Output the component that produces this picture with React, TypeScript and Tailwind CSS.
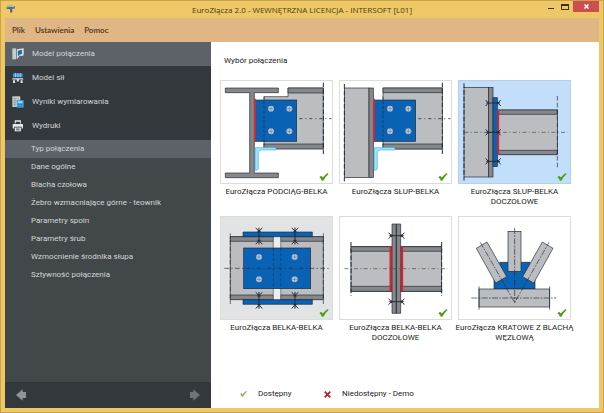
import { useState } from 'react';
import type { ReactNode } from 'react';

interface Connection {
  id: string;
  label: string;
  background: string;
  viewBox: string;
  drawing: ReactNode;
}

const STEEL = '#bcbdc1';
const FLANGE = '#858789';
const BLUE = '#0a62b4';
const LINE = '#222b36';
const RED = '#e0202c';

const subItems = [
  'Typ połączenia',
  'Dane ogólne',
  'Blacha czołowa',
  'Żebro wzmacniające górne - teownik',
  'Parametry spoin',
  'Parametry śrub',
  'Wzmocnienie środnika słupa',
  'Sztywność połączenia',
];

function BoltHead({ x, y }: { x: number; y: number }) {
  return (
    <g>
      <circle cx={x} cy={y} r="9" fill="#c9d3df" stroke="#2b5f98" strokeWidth="1" />
      <path d={`M${x - 7} ${y}h14M${x} ${y - 7}v14`} stroke="#66707c" strokeWidth="2" />
    </g>
  );
}

// Bolt seen from the side, x1..x2 are the tips of the shank
function SideBolt({ x1, x2, y }: { x1: number; x2: number; y: number }) {
  return (
    <path
      d={`M${x1} ${y}H${x2}M${x1 - 2} ${y - 9}l8 9l-8 9M${x2 + 2} ${y - 9}l-8 9l8 9M${x1 + 7} ${y - 4}v8M${x2 - 7} ${y - 4}v8`}
      fill="none"
      stroke={LINE}
      strokeWidth="3"
    />
  );
}

function VerticalBolt({ x, y }: { x: number; y: number }) {
  return (
    <path
      d={`M${x} ${y}v50M${x - 10} ${y + 1}l10 9l10 -9M${x - 10} ${y + 49}l10 -9l10 9M${x - 5} ${y + 12}h10M${x - 5} ${y + 38}h10`}
      fill="none"
      stroke={LINE}
      strokeWidth="3"
    />
  );
}

// Shear plate with four bolts, shared by both pinned joints
function ShearPlate() {
  return (
    <g>
      <rect x="123" y="76" width="123" height="124" fill={BLUE} stroke={LINE} strokeWidth="2" />
      <path d="M121 72v130" stroke={RED} strokeWidth="5" />
      <path d="M148 66v146" stroke={LINE} strokeWidth="2" strokeDasharray="9 5" />
      <BoltHead x={169} y={102} />
      <BoltHead x={224} y={102} />
      <BoltHead x={169} y={170} />
      <BoltHead x={224} y={170} />
      <path d="M122 219h58q6 0 4 7h-45q-8 0 -8 8v46q0 7 -9 7z" fill="#9ee2fb" stroke="#46b6e0" strokeWidth="2" />
      <path d="M254 132h96" stroke="#45484d" strokeWidth="3" strokeDasharray="9 9 3 9" />
      <path d="M326 24v216" stroke={LINE} strokeWidth="3" strokeDasharray="14 6" />
    </g>
  );
}

const connections: Connection[] = [
  {
    id: 'podciag-belka',
    label: 'EuroZłącza PODCIĄG-BELKA',
    background: 'bg-white border-[#dcdcdc]',
    viewBox: '19 19 333 306',
    drawing: (
      <g>
        <path d="M148 66H220V40H326V222H148z" fill={STEEL} stroke={LINE} strokeWidth="2" />
        <path d="M220 40H326V55H220zM148 208H326V223H148z" fill={FLANGE} stroke={LINE} strokeWidth="2" />
        <path
          d="M32 40H191V54H119V295H191V309H32V295H105V54H32z"
          fill={FLANGE}
          stroke={LINE}
          strokeWidth="2"
        />
        <ShearPlate />
      </g>
    ),
  },
  {
    id: 'slup-belka',
    label: 'EuroZłącza SŁUP-BELKA',
    background: 'bg-white border-[#dcdcdc]',
    viewBox: '19 19 333 306',
    drawing: (
      <g>
        <rect x="32" y="40" width="74" height="269" fill={STEEL} stroke={LINE} strokeWidth="2" />
        <rect x="106" y="40" width="13" height="269" fill={FLANGE} stroke={LINE} strokeWidth="2" />
        <path d="M32 28v292" stroke={LINE} strokeWidth="3" strokeDasharray="14 6" />
        <rect x="148" y="40" width="178" height="183" fill={STEEL} stroke={LINE} strokeWidth="2" />
        <path d="M148 40H326V54H148zM148 208H326V223H148z" fill={FLANGE} stroke={LINE} strokeWidth="2" />
        <ShearPlate />
      </g>
    ),
  },
  {
    id: 'slup-belka-doczolowe',
    label: 'EuroZłącza SŁUP-BELKA\nDOCZOŁOWE',
    background: 'bg-[#c3defb] border-[#b6cfea]',
    viewBox: '24 19 333 306',
    drawing: (
      <g>
        <rect x="39" y="38" width="73" height="269" fill={STEEL} stroke={LINE} strokeWidth="2" />
        <rect x="112" y="38" width="14" height="269" fill={FLANGE} stroke={LINE} strokeWidth="2" />
        <path d="M39 26v292" stroke={LINE} strokeWidth="3" strokeDasharray="14 6" />
        <rect x="142" y="106" width="177" height="133" fill={STEEL} stroke={LINE} strokeWidth="2" />
        <path d="M142 106H319V119H142zM142 227H319V240H142z" fill={FLANGE} stroke={LINE} strokeWidth="2" />
        <path d="M319 64v218" stroke={LINE} strokeWidth="2" strokeDasharray="14 6" />
        <rect x="126" y="69" width="13" height="207" fill={BLUE} stroke={LINE} strokeWidth="2" />
        <path d="M142 105v136" stroke={RED} strokeWidth="5" />
        <path d="M40 173h310" stroke="#45484d" strokeWidth="2" strokeDasharray="12 7 3 7" />
        <SideBolt x1={106} x2={147} y={85} />
        <SideBolt x1={106} x2={147} y={173} />
        <SideBolt x1={106} x2={147} y={260} />
      </g>
    ),
  },
  {
    id: 'belka-belka',
    label: 'EuroZłącza BELKA-BELKA',
    background: 'bg-[#e2e3e4] border-[#dcdcdc]',
    viewBox: '19 21 333 306',
    drawing: (
      <g>
        <path d="M47 80H176V268H47zM198 80H326V268H198z" fill={STEEL} stroke={LINE} strokeWidth="2" />
        <path
          d="M47 80H176V94H47zM198 80H326V94H198zM47 255H176V269H47zM198 255H326V269H198z"
          fill={FLANGE}
          stroke={LINE}
          strokeWidth="2"
        />
        <rect x="177" y="81" width="20" height="187" fill="#ededee" />
        <path d="M47 70v212M326 70v212" stroke={LINE} strokeWidth="2" strokeDasharray="14 6" />
        <path d="M85 66H293V80H85zM85 269H293V283H85z" fill={BLUE} stroke={LINE} strokeWidth="2" />
        <rect x="87" y="114" width="201" height="122" fill={BLUE} stroke={LINE} strokeWidth="2" />
        <path d="M176 114v122M198 114v122" stroke="#123d69" strokeWidth="2" strokeDasharray="10 5" />
        <path d="M29 175h314" stroke={LINE} strokeWidth="2" strokeDasharray="14 7 4 7" />
        <BoltHead x={133} y={141} />
        <BoltHead x={240} y={141} />
        <BoltHead x={133} y={208} />
        <BoltHead x={240} y={208} />
        <VerticalBolt x={133} y={53} />
        <VerticalBolt x={241} y={53} />
        <VerticalBolt x={133} y={246} />
        <VerticalBolt x={241} y={246} />
      </g>
    ),
  },
  {
    id: 'belka-belka-doczolowe',
    label: 'EuroZłącza BELKA-BELKA\nDOCZOŁOWE',
    background: 'bg-white border-[#dcdcdc]',
    viewBox: '19 21 333 306',
    drawing: (
      <g>
        <rect x="52" y="110" width="272" height="134" fill={STEEL} stroke={LINE} strokeWidth="2" />
        <path d="M52 110H324V124H52zM52 229H324V244H52z" fill={FLANGE} stroke={LINE} strokeWidth="2" />
        <path d="M52 96v162M324 96v162" stroke={LINE} strokeWidth="3" strokeDasharray="14 6" />
        <path d="M171 109v135M205 109v135" stroke={RED} strokeWidth="7" />
        <path d="M175 42H188V310H175zM188 42H201V310H188z" fill={FLANGE} stroke={LINE} strokeWidth="2" />
        <path d="M32 176h310" stroke="#45484d" strokeWidth="2" strokeDasharray="12 7 3 7" />
        <SideBolt x1={167} x2={210} y={77} />
        <SideBolt x1={167} x2={210} y={275} />
      </g>
    ),
  },
  {
    id: 'kratowe',
    label: 'EuroZłącza KRATOWE Z BLACHĄ\nWĘZŁOWĄ',
    background: 'bg-white border-[#dcdcdc]',
    viewBox: '25 21 333 306',
    drawing: (
      <g>
        <path d="M147 157H238V196L253 206V237H130V206L147 196z" fill={BLUE} stroke={LINE} strokeWidth="2" />
        <rect x="85" y="237" width="212" height="54" fill={STEEL} stroke={LINE} strokeWidth="2" />
        <rect x="172" y="64" width="39" height="120" fill={STEEL} stroke={LINE} strokeWidth="2" />
        <path d="M77 115L109 96L168 200L135 219z" fill={STEEL} stroke={LINE} strokeWidth="2" />
        <path d="M307 115L275 96L216 200L249 219z" fill={STEEL} stroke={LINE} strokeWidth="2" />
        <path
          d="M89 97L192 278L295 97M192 54V278M62 264H317"
          fill="none"
          stroke={LINE}
          strokeWidth="2"
          strokeDasharray="18 4 5 4"
        />
        <path d="M85 229v70M297 229v70" stroke={LINE} strokeWidth="2" />
      </g>
    ),
  },
];

function CheckIcon({ className }: { className: string }) {
  return (
    <svg viewBox="0 0 30 26" className={className} aria-hidden="true">
      <path d="M0 14L6 9L11 15Q18 6 27 0L30 3Q19 12 13 25H8Q6 19 0 14z" fill="#4c9f14" />
    </svg>
  );
}

const navItems = [
  {
    label: 'Model połączenia',
    icon: (
      <g>
        <path d="M1 1H12V33H1z" fill="#c5cbd0" />
        <path d="M14 4L34 1V21L26 24L23 21L16 31H14z" fill="#dce3e8" />
        <path d="M17 8L29 5V18L22 19L17 24z" fill="#1d6ca8" />
      </g>
    ),
  },
  {
    label: 'Model sił',
    icon: (
      <g>
        <path d="M3 4H31V15H3z" fill="#3b9be0" />
        <path d="M10 3v12M17 3v12M24 3v12" stroke="#c6e4fa" strokeWidth="2" />
        <path d="M1 18H33V22H1zM3 24H9V32H3zM25 24H31V32H25zM14 22H20V28H14z" fill="#dce3e8" />
      </g>
    ),
  },
  {
    label: 'Wyniki wymiarowania',
    icon: (
      <g>
        <path d="M1 1H24V32H1z" fill="#cdd2d6" />
        <path d="M4 8H21M4 14H14M4 20H12M4 26H12M8 3V30" stroke="#8b9299" strokeWidth="2" />
        <path d="M14 12H34V34H14z" fill="#3aa2e4" />
        <path d="M18 16H30V20H18z" fill="#d4ecfb" />
        <path d="M18 25h4M26 25h4M18 30h4M26 30h4" stroke="#1a6ea9" strokeWidth="2" />
      </g>
    ),
  },
  {
    label: 'Wydruki',
    icon: (
      <g fill="#e4e7e9">
        <path d="M8 1H26V10H23V5H11V10H8z" />
        <path d="M2 12H32V25H28V20H6V25H2z" />
        <path d="M8 22H26V33H8z" />
        <path d="M12 26H22M12 29H22" stroke="#34393d" strokeWidth="2" />
      </g>
    ),
  },
];

export default function App() {
  const [activeNav, setActiveNav] = useState('Model połączenia');
  const [activeSub, setActiveSub] = useState('Typ połączenia');

  return (
    <div className="flex min-h-screen flex-col border border-[#c9a24a] bg-[#eec866] px-1 pb-1 font-[Roboto,sans-serif] text-[#222]">
      {/* Title bar */}
      <header className="flex h-[17px] items-start">
        <div className="flex w-16 shrink-0 pt-1 pl-px">
          <svg viewBox="0 0 30 26" className="h-2 w-[10px]" aria-hidden="true">
            <path d="M1 6L10 2L28 4V11L19 12V24H12V13H1z" fill="#4d6b80" />
            <path d="M3 7L12 4L26 6" fill="none" stroke="#c2d0d5" strokeWidth="3" />
          </svg>
        </div>
        <h1 className="flex-1 text-center font-['Open_Sans',sans-serif] text-[8px] leading-[17px] text-[#493b18]">
          EuroZłącza 2.0 - WEWNĘTRZNA LICENCJA - INTERSOFT [L01]
        </h1>
        <div className="flex w-16 shrink-0 items-start justify-end">
          <button type="button" aria-label="Minimalizuj" className="flex h-3 w-3 items-end justify-center pb-1">
            <span className="h-px w-[6px] bg-[#3d3212]" />
          </button>
          <button type="button" aria-label="Maksymalizuj" className="flex h-3 w-4 items-center justify-center">
            <span className="h-[6px] w-2 border border-t-2 border-[#3d3212]" />
          </button>
          <button type="button" aria-label="Zamknij" className="flex h-[11px] w-[26px] items-center justify-center bg-[#c9504f]">
            <svg viewBox="0 0 10 10" className="h-[5px] w-[5px]" aria-hidden="true">
              <path d="M1 1L9 9M9 1L1 9" stroke="#fff" strokeWidth="3" />
            </svg>
          </button>
        </div>
      </header>

      {/* Menu bar */}
      <nav className="flex h-6 items-center gap-[10px] bg-[#e0b684] px-[7px] font-[Lato,sans-serif] text-[8px] font-semibold text-[#45341a]">
        <button type="button">Plik</button>
        <button type="button">Ustawienia</button>
        <button type="button">Pomoc</button>
      </nav>

      <div className="flex flex-1">
        {/* Sidebar */}
        <aside className="flex w-[206px] shrink-0 flex-col bg-[#42474a] text-[8px] text-[#d3d6d8]">
          <ul className="bg-[#33383c] pb-[2px]">
            {navItems.map(item => (
              <li key={item.label}>
                <button
                  type="button"
                  onClick={() => setActiveNav(item.label)}
                  className={`flex h-6 w-full items-center gap-2 pl-[7px] text-left ${
                    activeNav === item.label ? 'bg-[#5c6267]' : ''
                  }`}
                >
                  <svg viewBox="0 0 35 35" className="h-3 w-3" aria-hidden="true">
                    {item.icon}
                  </svg>
                  {item.label}
                </button>
              </li>
            ))}
          </ul>
          <ul>
            {subItems.map(label => (
              <li key={label}>
                <button
                  type="button"
                  onClick={() => setActiveSub(label)}
                  className={`block h-[18px] w-full pl-[26px] text-left ${
                    activeSub === label ? 'bg-[#5c6267]' : ''
                  }`}
                >
                  {label}
                </button>
              </li>
            ))}
          </ul>
          <div className="mt-auto flex h-[26px] items-center justify-between bg-[#33383c] px-[11px]">
            <button type="button" aria-label="Wstecz">
              <svg viewBox="0 0 30 34" className="h-3 w-[10px]" aria-hidden="true">
                <path d="M0 17L20 0V8H30V26H20V34z" fill="#8f9498" />
              </svg>
            </button>
            <button type="button" aria-label="Dalej">
              <svg viewBox="0 0 30 34" className="h-3 w-[10px]" aria-hidden="true">
                <path d="M30 17L10 0V8H0V26H10V34z" fill="#70757a" />
              </svg>
            </button>
          </div>
        </aside>

        <main className="flex flex-1 flex-col bg-white px-[9px]">
          <h2 className="pt-[14px] pl-1 text-[8px] leading-[10px]">Wybór połączenia</h2>
          <div className="mt-[14px] flex flex-wrap gap-x-[6px] gap-y-[10px]">
            {connections.map(item => (
              <button key={item.id} type="button" className="flex h-[126px] w-[113px] flex-col items-center">
                <span className={`relative block w-full border ${item.background}`}>
                  <svg viewBox={item.viewBox} className="block w-full" aria-hidden="true">
                    {item.drawing}
                  </svg>
                  <CheckIcon className="absolute right-[3px] bottom-[2px] h-2 w-[10px]" />
                </span>
                <span className="pt-[3px] text-[8px] leading-[10px] whitespace-pre">{item.label}</span>
              </button>
            ))}
          </div>
          <footer className="mt-auto flex items-center pb-[9px] pl-5 text-[8px] leading-[10px]">
            <CheckIcon className="h-[6px] w-[7px] opacity-70" />
            <span className="w-[77px] pl-[11px]">Dostępny</span>
            <svg viewBox="0 0 20 20" className="h-[7px] w-[7px]" aria-hidden="true">
              <path d="M2 2L18 18M18 2L2 18" stroke="#c01f24" strokeWidth="5" />
            </svg>
            <span className="pl-[11px]">Niedostępny - Demo</span>
          </footer>
        </main>
      </div>
    </div>
  );
}
